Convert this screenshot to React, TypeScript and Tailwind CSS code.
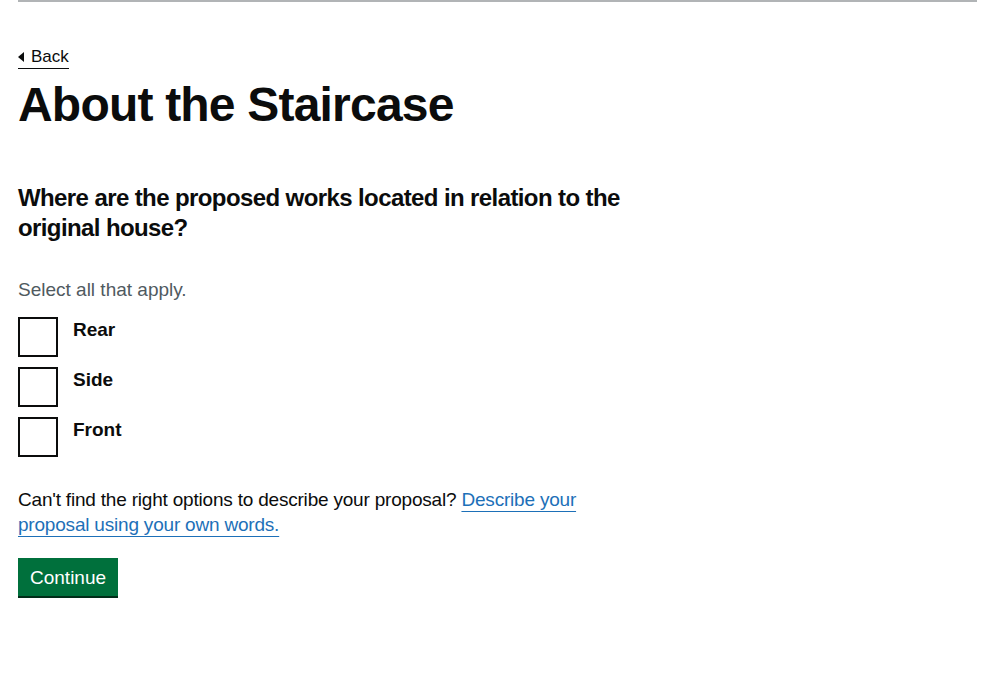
import React from 'react';

const options = ['Rear', 'Side', 'Front'];

export default function App() {
  return (
    <div className="min-h-screen bg-white text-[#0b0c0c]" style={{ fontFamily: '"Liberation Sans", Arial, sans-serif' }}>
      <div className="ml-[18px] mr-[10px] border-t-2 border-[#b1b4b6]" />
      <main className="px-[18px]">
        {/* Back link */}
        <a href="#" className="mt-[45px] inline-flex items-center gap-[7px] border-b border-[#0b0c0c] pb-[1px] text-[17px] leading-[20px] text-[#0b0c0c]">
          <span className="inline-block h-0 w-0 border-y-[5px] border-r-[6px] border-y-transparent border-r-[#0b0c0c]" />
          Back
        </a>

        <h1 className="mt-[11px] text-[48px] font-bold leading-[50px] tracking-[-0.8px]">About the Staircase</h1>

        <div className="max-w-[634px]">
          <h2 className="mt-[53px] text-[24px] font-bold leading-[30px] tracking-[-0.6px]">
            Where are the proposed works located in relation to the original house?
          </h2>

          <p className="mt-[34px] text-[19px] leading-[25px] text-[#505a5f]">Select all that apply.</p>

          <div className="mt-[15px] flex flex-col gap-[10px]">
            {options.map((o) => (
              <label key={o} className="flex items-start gap-[15px]">
                <span className="block h-[40px] w-[40px] border-2 border-[#0b0c0c] bg-white" />
                <span className="text-[19px] font-bold leading-[25px]">{o}</span>
              </label>
            ))}
          </div>

          <p className="mt-[30px] text-[19px] leading-[25px] tracking-[-0.2px]">
            Can't find the right options to describe your proposal?{' '}
            <a href="#" className="text-[#1d70b8] underline decoration-1 underline-offset-[5px]">
              Describe your proposal using your own words.
            </a>
          </p>

          <button className="mt-[21px] bg-[#00703c] px-[12px] pb-[7px] pt-[8px] text-[19px] leading-[23px] text-white shadow-[0_2px_0_#002d18]">
            Continue
          </button>
        </div>
      </main>
    </div>
  );
}
